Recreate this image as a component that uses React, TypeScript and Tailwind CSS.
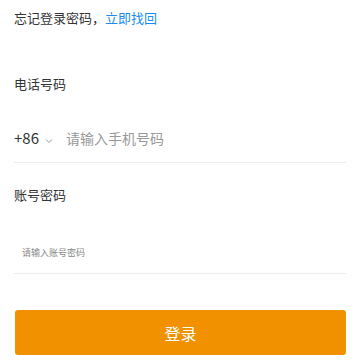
import React from "react";

export default function App() {
  const font = { fontFamily: '"Noto Sans CJK SC", "Noto Sans", sans-serif' };
  return (
    <div className="w-[360px] h-[360px] bg-white overflow-hidden flex flex-col px-[14px]" style={font}>
      <div className="pt-[8px] h-[22px] text-[13px] leading-[20px] text-[#333]">
        忘记登录密码，<span className="text-[#1a8cf0]">立即找回</span>
      </div>
      <div className="mt-[52px] text-[13px] leading-[20px] text-[#333]">电话号码</div>
      <div className="mt-[33px] flex items-center h-[22px]">
        <span className="text-[15px] text-[#333] leading-[22px]">+86</span>
        <svg className="ml-[6px] mt-[5px]" width="8" height="6" viewBox="0 0 8 6" fill="none">
          <path d="M1 1.5 L4 4.5 L7 1.5" stroke="#999" strokeWidth="1" />
        </svg>
        <span className="ml-[13px] text-[14px] text-[#999] leading-[22px]">请输入手机号码</span>
      </div>
      <div className="mt-[13px] h-px bg-[#ececec] w-[332px]" />
      <div className="mt-[22px] text-[13px] leading-[20px] text-[#333]">账号密码</div>
      <div className="mt-[41px] pl-[8px] text-[9px] leading-[14px] text-[#888]">请输入账号密码</div>
      <div className="mt-[13px] h-px bg-[#ececec] w-[332px]" />
      <button className="mt-[36px] ml-px w-[331px] h-[45px] rounded-[3px] bg-[#f29100] text-white text-[16px] flex items-center justify-center">
        登录
      </button>
    </div>
  );
}
